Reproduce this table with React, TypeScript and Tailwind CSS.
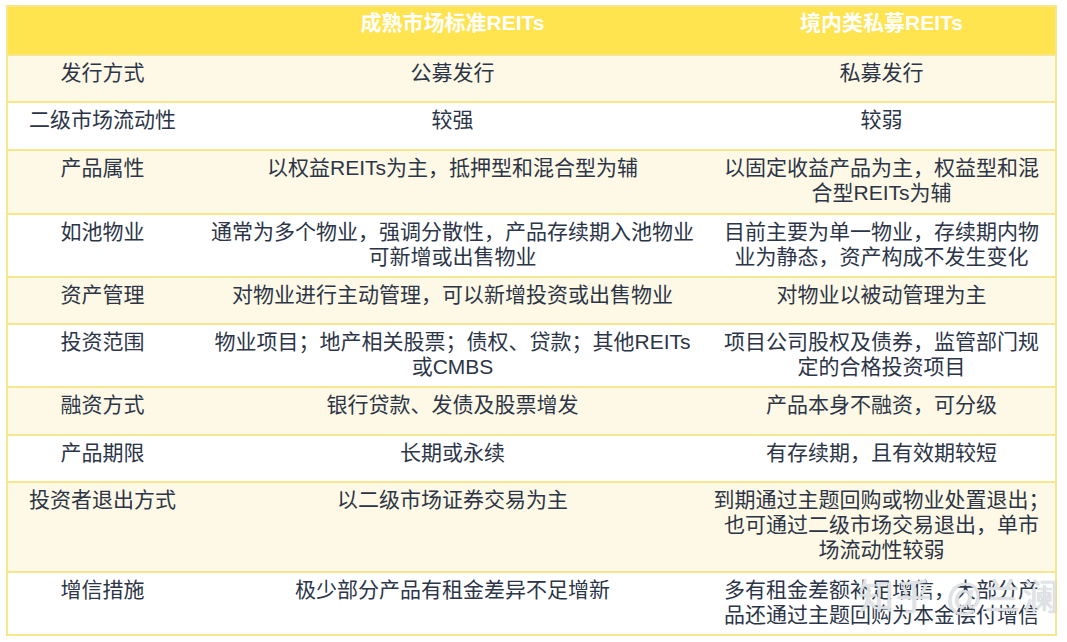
import React from "react";

type Row = { h: string; bg: string; a: React.ReactNode; b: React.ReactNode; c: React.ReactNode };

const rows: Row[] = [
  { h: "h-[47px]", bg: "bg-[#fef9e6]", a: "发行方式", b: "公募发行", c: "私募发行" },
  { h: "h-[48px]", bg: "bg-white", a: "二级市场流动性", b: "较强", c: "较弱" },
  {
    h: "h-[64px]",
    bg: "bg-[#fef9e6]",
    a: "产品属性",
    b: "以权益REITs为主，抵押型和混合型为辅",
    c: (
      <>
        以固定收益产品为主，权益型和混
        <br />
        合型REITs为辅
      </>
    ),
  },
  {
    h: "h-[63px]",
    bg: "bg-white",
    a: "如池物业",
    b: (
      <>
        通常为多个物业，强调分散性，产品存续期入池物业
        <br />
        可新增或出售物业
      </>
    ),
    c: (
      <>
        目前主要为单一物业，存续期内物
        <br />
        业为静态，资产构成不发生变化
      </>
    ),
  },
  {
    h: "h-[47px]",
    bg: "bg-[#fef9e6]",
    a: "资产管理",
    b: "对物业进行主动管理，可以新增投资或出售物业",
    c: "对物业以被动管理为主",
  },
  {
    h: "h-[63px]",
    bg: "bg-white",
    a: "投资范围",
    b: (
      <>
        物业项目；地产相关股票；债权、贷款；其他REITs
        <br />
        或CMBS
      </>
    ),
    c: (
      <>
        项目公司股权及债券，监管部门规
        <br />
        定的合格投资项目
      </>
    ),
  },
  {
    h: "h-[48px]",
    bg: "bg-[#fef9e6]",
    a: "融资方式",
    b: "银行贷款、发债及股票增发",
    c: "产品本身不融资，可分级",
  },
  { h: "h-[47px]", bg: "bg-white", a: "产品期限", b: "长期或永续", c: "有存续期，且有效期较短" },
  {
    h: "h-[90px]",
    bg: "bg-[#fef9e6]",
    a: "投资者退出方式",
    b: "以二级市场证券交易为主",
    c: (
      <>
        到期通过主题回购或物业处置退出；
        <br />
        也可通过二级市场交易退出，单市
        <br />
        场流动性较弱
      </>
    ),
  },
  {
    h: "h-[63px]",
    bg: "bg-white",
    a: "增信措施",
    b: "极少部分产品有租金差异不足增新",
    c: (
      <>
        多有租金差额补足增信，大部分产
        <br />
        品还通过主题回购为本金偿付增信
      </>
    ),
  },
];

export default function App() {
  return (
    <div
      className="relative w-[1067px] h-[642px] bg-white overflow-hidden"
      style={{ fontFamily: '"Liberation Sans", "Noto Sans CJK SC", sans-serif' }}
    >
      <div className="ml-[6px] mt-[5px] w-[1051px] border-x-2 border-t-2 border-[#f6e78e]">
        <div className="grid grid-cols-[189px_511px_347px] h-[49px] bg-[#ffe34f] border-b-2 border-[#f6e78e] text-white font-bold text-[21px] leading-[25px] pt-[3px]">
          <div></div>
          <div className="text-center">成熟市场标准REITs</div>
          <div className="text-center">境内类私募REITs</div>
        </div>
        {rows.map((r, i) => (
          <div
            key={i}
            className={`grid grid-cols-[189px_511px_347px] ${r.h} ${r.bg} border-b-2 border-[#f6e78e] text-[#2c3547] text-[21px] leading-[25px] pt-[4px] whitespace-nowrap`}
          >
            <div className="text-center">{r.a}</div>
            <div className="text-center">{r.b}</div>
            <div className="text-center">{r.c}</div>
          </div>
        ))}
      </div>
      <div className="absolute left-[858px] top-[578px] text-[36px] leading-[40px] text-white/70 [text-shadow:0_0_1px_#9aa0aa] tracking-[2px] pointer-events-none">
        知乎 @兰澜
      </div>
    </div>
  );
}
